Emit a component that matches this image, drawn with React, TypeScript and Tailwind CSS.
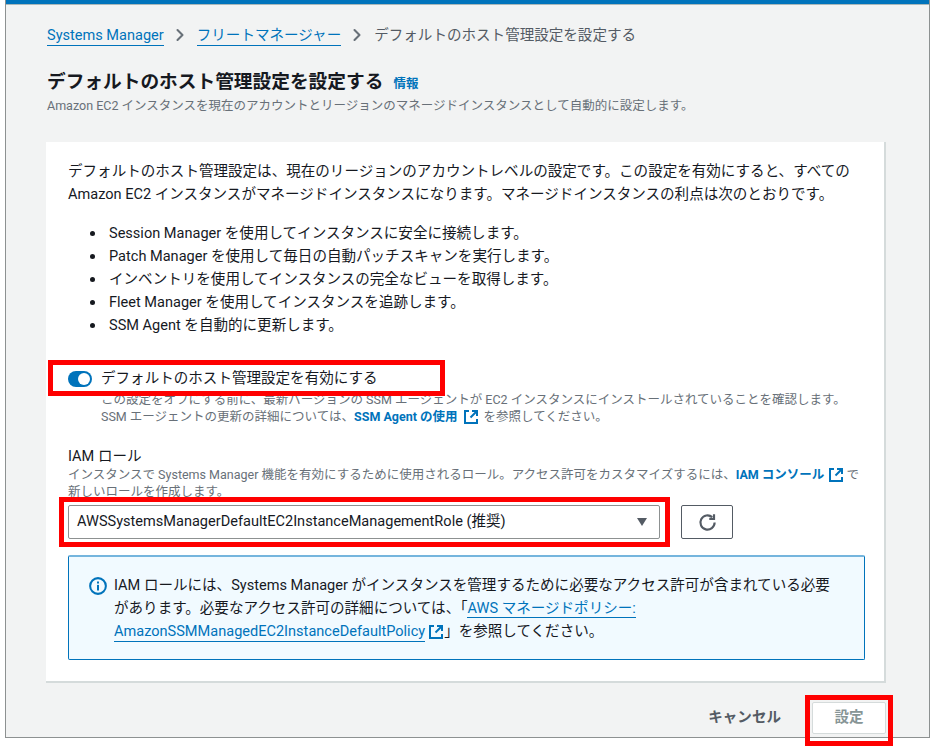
import { ChevronRight } from "lucide-react";

const FONT = "font-['Roboto','Noto_Sans_CJK_JP',sans-serif]";

function ExternalIcon({ className }: { className: string }) {
  return (
    <svg viewBox="0 0 16 16" fill="none" stroke="currentColor" strokeWidth="2" className={className}>
      <path d="M6 2H2v12h12v-4" />
      <path d="M9 2h5v5" />
      <path d="M14 2 7.5 8.5" />
    </svg>
  );
}

const BENEFITS = [
  "Session Manager を使用してインスタンスに安全に接続します。",
  "Patch Manager を使用して毎日の自動パッチスキャンを実行します。",
  "インベントリを使用してインスタンスの完全なビューを取得します。",
  "Fleet Manager を使用してインスタンスを追跡します。",
  "SSM Agent を自動的に更新します。",
];

export default function App() {
  return (
    <div className={`${FONT} relative w-[933px] h-[747px] overflow-hidden bg-white text-[#16191f]`}>
      <div className="ml-[5px] w-[925px] h-[738px] flex flex-col bg-[#f2f3f3] border-l border-r border-b border-[#8d9191]">
        <div className="h-[5px] shrink-0 bg-[#0073bb] border-b border-[#aab7b8]" />

        <div className="pl-[41px] pr-[43px]">
          {/* Breadcrumbs */}
          <nav className="flex items-center h-[20px] mt-[20px] text-[14.56px] leading-[20px]">
            <a className="text-[#0073bb] border-b border-[#0073bb]">Systems Manager</a>
            <ChevronRight className="w-[20px] h-[20px] ml-[6px] mr-[7px] text-[#687078]" strokeWidth={2.5} />
            <a className="text-[#0073bb] border-b border-[#0073bb]">フリートマネージャー</a>
            <ChevronRight className="w-[20px] h-[20px] ml-[6px] mr-[7px] text-[#687078]" strokeWidth={2.5} />
            <span className="text-[#545b64]">デフォルトのホスト管理設定を設定する</span>
          </nav>

          {/* Page header */}
          <div className="flex items-baseline mt-[24px] leading-[26px]">
            <h1 className="text-[18.7px] font-bold">デフォルトのホスト管理設定を設定する</h1>
            <a className="ml-[10px] text-[12.5px] font-bold text-[#0073bb]">情報</a>
          </div>
          <p className="mt-[1px] text-[12.5px] leading-[16px] text-[#687078] whitespace-nowrap">
            Amazon EC2 インスタンスを現在のアカウントとリージョンのマネージドインスタンスとして自動的に設定します。
          </p>

          {/* Card */}
          <section className="mt-[28px] -ml-[1px] h-[541px] bg-white border-b-2 border-r-2 border-[#d5dbdb] pt-[18px] pl-[22px] pr-[20px] text-[14.56px]">
            <p className="leading-[23px] whitespace-nowrap">
              デフォルトのホスト管理設定は、現在のリージョンのアカウントレベルの設定です。この設定を有効にすると、すべての
              <br />
              Amazon EC2 インスタンスがマネージドインスタンスになります。マネージドインスタンスの利点は次のとおりです。
            </p>

            <ul className="mt-[16px] pl-[38px] list-disc leading-[23px]">
              {BENEFITS.map((b) => (
                <li key={b} className="pl-[3px]">{b}</li>
              ))}
            </ul>

            {/* Toggle */}
            <div className="flex items-center mt-[30px] h-[24px]">
              <div className="w-[24px] h-[16px] rounded-full bg-[#0073bb] flex items-center justify-end pr-[2px]">
                <div className="w-[12px] h-[12px] rounded-full bg-white" />
              </div>
              <span className="ml-[9px]">デフォルトのホスト管理設定を有効にする</span>
            </div>
            <div className="pl-[33px] text-[12.5px] leading-[17px] text-[#687078] whitespace-nowrap">
              <p>この設定をオフにする前に、最新バージョンの SSM エージェントが EC2 インスタンスにインストールされていることを確認します。</p>
              <p className="flex items-center">
                SSM エージェントの更新の詳細については、
                <a className="font-bold text-[#0073bb]">SSM Agent の使用</a>
                <ExternalIcon className="w-[16px] h-[16px] ml-[5px] mr-[5px] text-[#0073bb]" />
                を参照してください。
              </p>
            </div>

            {/* IAM role */}
            <div className="mt-[21px] leading-[20px]">IAM ロール</div>
            <div className="text-[12.5px] leading-[17px] text-[#687078] whitespace-nowrap">
              <p className="flex items-center">
                インスタンスで Systems Manager 機能を有効にするために使用されるロール。アクセス許可をカスタマイズするには、
                <a className="font-bold text-[#0073bb]">IAM コンソール</a>
                <ExternalIcon className="w-[16px] h-[16px] ml-[4px] mr-[2px] text-[#0073bb]" />
                で
              </p>
              <p>新しいロールを作成します。</p>
            </div>

            <div className="flex mt-[5px] gap-[21px]">
              <div className="w-[592px] h-[34px] flex items-center justify-between bg-white border border-[#8d9191] rounded-[2px] pl-[8px] pr-[11px] whitespace-nowrap">
                <span>AWSSystemsManagerDefaultEC2InstanceManagementRole (推奨)</span>
                <svg viewBox="0 0 12 10" className="w-[12px] h-[10px] text-[#545b64]" fill="currentColor">
                  <path d="M1 1h10L6 9z" />
                </svg>
              </div>
              <button className="w-[52px] h-[34px] flex items-center justify-center bg-white border border-[#545b64] rounded-[2px] text-[#545b64]">
                <svg viewBox="0 0 16 16" fill="none" stroke="currentColor" strokeWidth="1.8" className="w-[19px] h-[19px]">
                  <path d="M14 8a6 6 0 1 1-2-4.5" />
                  <path d="M13.5 1v4h-4" />
                </svg>
              </button>
            </div>

            {/* Info alert */}
            <div className="mt-[16px] w-[797px] h-[105px] flex bg-[#f1faff] border border-[#0073bb] border-t-2 border-t-[#75b5dd] rounded-[2px] pl-[20px] pt-[17px] leading-[23px]">
              <svg viewBox="0 0 16 16" fill="none" stroke="#0073bb" strokeWidth="1.8" className="w-[18px] h-[18px] mt-[3px] shrink-0">
                <circle cx="8" cy="8" r="7" />
                <path d="M8 7v5" />
                <path d="M8 4v1.8" />
              </svg>
              <div className="ml-[7px] whitespace-nowrap">
                <p>IAM ロールには、Systems Manager がインスタンスを管理するために必要なアクセス許可が含まれている必要</p>
                <p>
                  があります。必要なアクセス許可の詳細については、「
                  <a className="text-[#0073bb] border-b border-[#0073bb]">AWS マネージドポリシー:</a>
                </p>
                <p className="flex items-center">
                  <a className="text-[#0073bb] border-b border-[#0073bb] leading-[19px]">AmazonSSMManagedEC2InstanceDefaultPolicy</a>
                  <ExternalIcon className="w-[16px] h-[16px] ml-[3px] text-[#0073bb]" />
                  」を参照してください。
                </p>
              </div>
            </div>
          </section>

          {/* Actions */}
          <div className="flex items-center justify-end mt-[19px]">
            <button className="text-[14.56px] font-bold text-[#545b64] mr-[31px]">キャンセル</button>
            <button className="w-[74px] h-[32px] bg-white border border-[#d5dbdb] rounded-[2px] text-[14.56px] font-bold text-[#879596]">
              設定
            </button>
          </div>
        </div>
      </div>

      {/* Red annotation boxes drawn over the screenshot */}
      <div className="absolute left-[48px] top-[360px] w-[397px] h-[36px] border-[5px] border-[#ff0000]" />
      <div className="absolute left-[59px] top-[497px] w-[611px] h-[50px] border-[5px] border-[#ff0000]" />
      <div className="absolute left-[805px] top-[695px] w-[88px] h-[51px] border-[5px] border-[#ff0000]" />
    </div>
  );
}
